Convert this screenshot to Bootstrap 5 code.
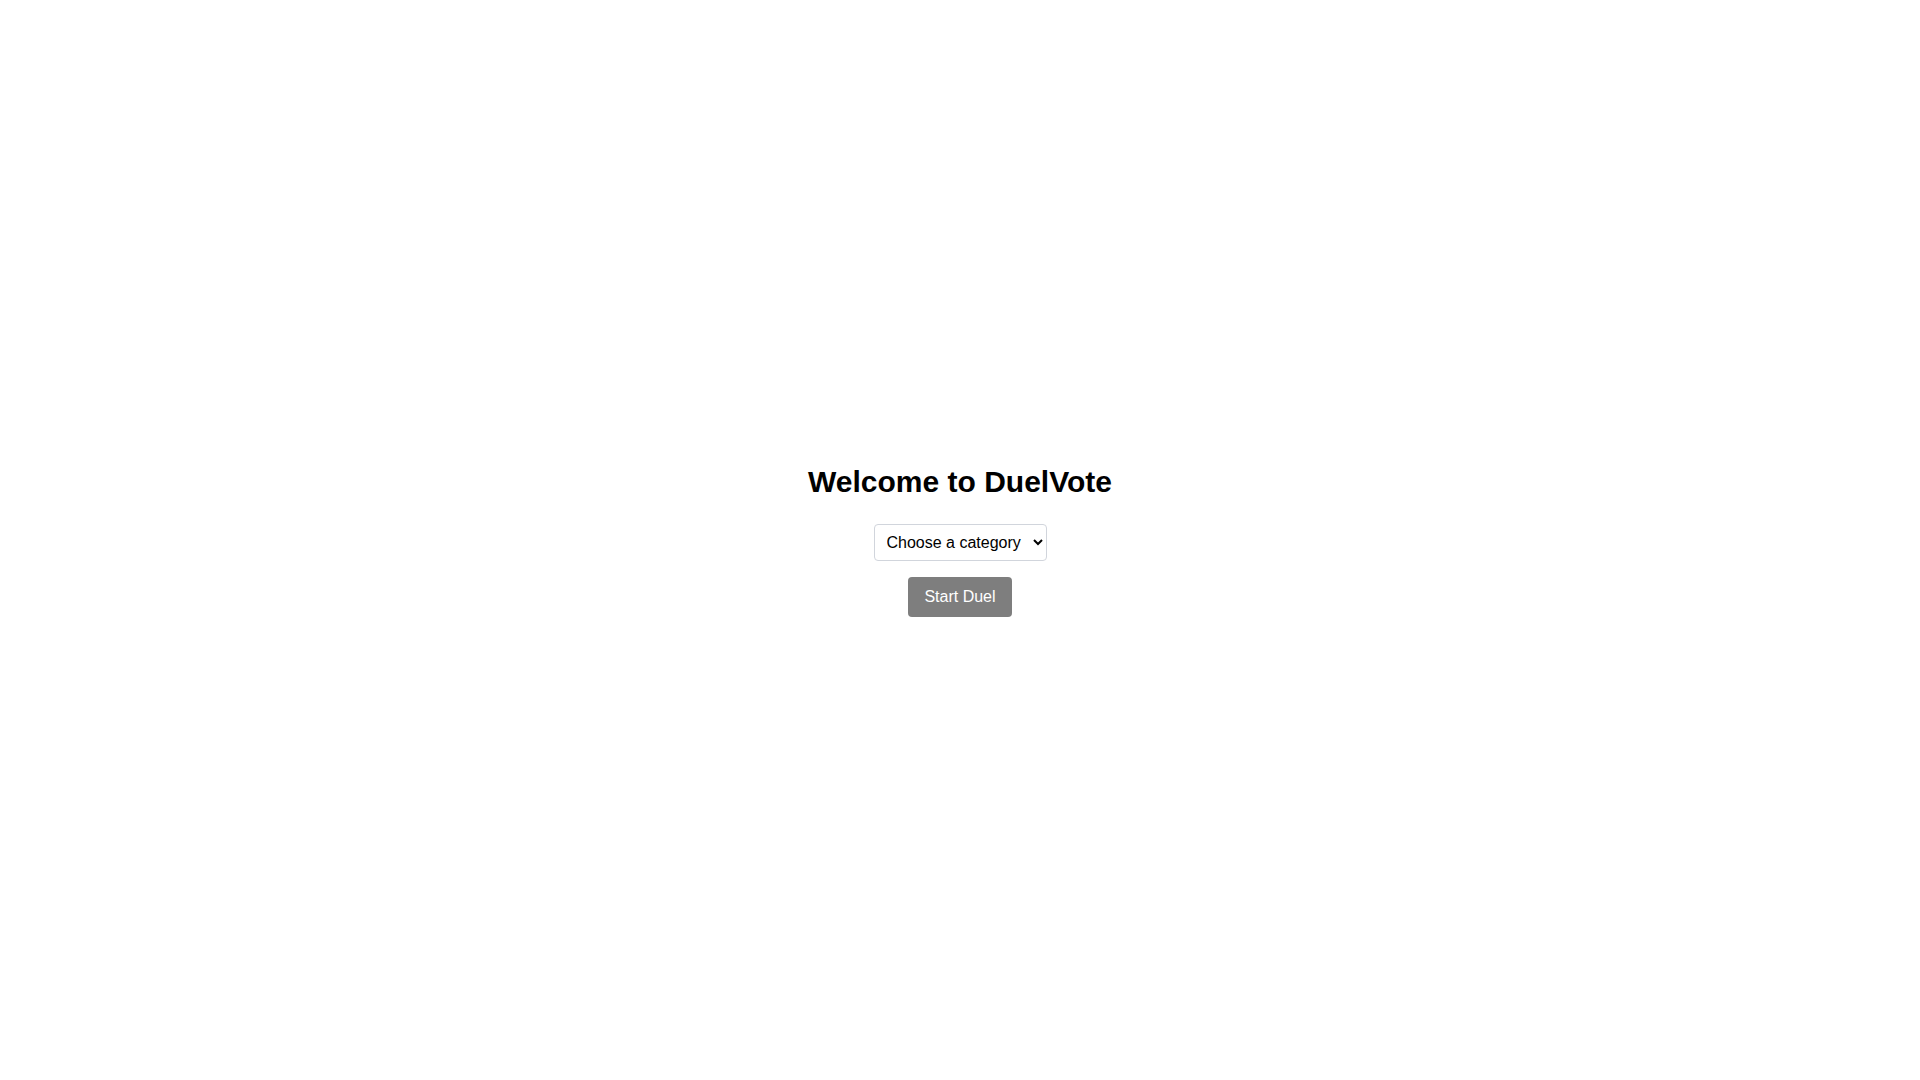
<!DOCTYPE html>
<html lang="en">
<head>
<meta charset="utf-8">
<meta name="viewport" content="width=device-width, initial-scale=1">
<title>DuelVote</title>
<link href="https://cdn.jsdelivr.net/npm/bootstrap@5.3.0/dist/css/bootstrap.min.css" rel="stylesheet">
<style>
body { font-family: "Liberation Sans", Arial, sans-serif; color: #000; background: #fff; }
.welcome-title { font-size: 30px; line-height: 36px; }
.category-select { font: inherit; padding: 8px; color: #000; background: #fff; border: 1px solid #d1d5dc; border-radius: 4px; }
.start-btn { --bs-btn-padding-x: 16px; --bs-btn-padding-y: 8px; --bs-btn-border-radius: 4px; --bs-btn-border-width: 0; --bs-btn-disabled-bg: #000; --bs-btn-disabled-color: #fff; --bs-btn-disabled-opacity: .5; line-height: 24px; }
</style>
</head>
<body>
<main class="min-vh-100 d-flex flex-column align-items-center justify-content-center p-4">
<h1 class="welcome-title fw-bold mb-4">Welcome to DuelVote</h1>
<select class="category-select mb-3" aria-label="Category">
<option value="">Choose a category</option>
</select>
<button type="button" class="btn start-btn" disabled>Start Duel</button>
</main>
<script src="https://cdn.jsdelivr.net/npm/bootstrap@5.3.0/dist/js/bootstrap.bundle.min.js"></script>
</body>
</html>
